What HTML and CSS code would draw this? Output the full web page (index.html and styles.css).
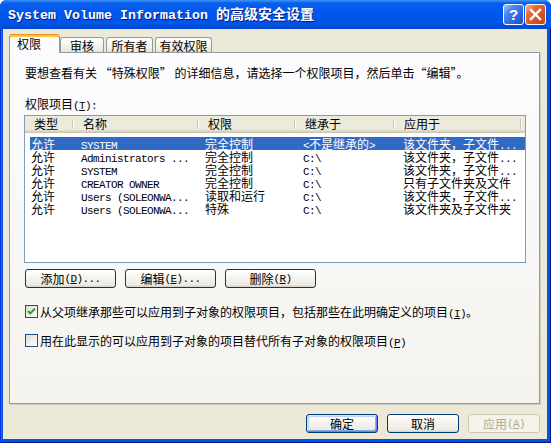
FILE: index.html
```html
<!DOCTYPE html>
<html>
<head>
<meta charset="utf-8">
<title>System Volume Information 的高级安全设置</title>
<link rel="stylesheet" href="styles.css">
</head>
<body>
<div class="window">
  <div class="titlebar">
    <div class="title"><span class="tl">System Volume Information </span>的高级安全设置</div>
    <div class="tbtns">
      <div class="tb help">?</div>
      <div class="tb close"><svg width="19" height="19" viewBox="0 0 19 19"><path d="M5 5 L14 14 M14 5 L5 14" stroke="#fff" stroke-width="2.4" stroke-linecap="square"/></svg></div>
    </div>
  </div>
  <div class="body">
    <div class="tabs">
      <div class="tab active">权限</div>
      <div class="tab t2">审核</div>
      <div class="tab t3">所有者</div>
      <div class="tab t4">有效权限</div>
    </div>
    <div class="panel">
      <p class="info">要想查看有关 “特殊权限” 的详细信息，请选择一个权限项目，然后单击“编辑”。</p>
      <p class="label">权限项目<span class="m">(<u>T</u>):</span></p>
      <div class="listbox">
        <div class="lhead">
          <div class="hc">类型</div>
          <div class="hc">名称</div>
          <div class="hc">权限</div>
          <div class="hc">继承于</div>
          <div class="hc">应用于</div>
        </div>
        <div class="lrows">
          <div class="lrow sel"><div>允许</div><div><span class="m">SYSTEM</span></div><div>完全控制</div><div><span class="m">&lt;</span>不是继承的<span class="m">&gt;</span></div><div>该文件夹，子文件<span class="m">...</span></div></div>
          <div class="lrow"><div>允许</div><div><span class="m">Administrators ...</span></div><div>完全控制</div><div><span class="m">C:\</span></div><div>该文件夹，子文件<span class="m">...</span></div></div>
          <div class="lrow"><div>允许</div><div><span class="m">SYSTEM</span></div><div>完全控制</div><div><span class="m">C:\</span></div><div>该文件夹，子文件<span class="m">...</span></div></div>
          <div class="lrow"><div>允许</div><div><span class="m">CREATOR OWNER</span></div><div>完全控制</div><div><span class="m">C:\</span></div><div>只有子文件夹及文件</div></div>
          <div class="lrow"><div>允许</div><div><span class="m">Users (SOLEONWA...</span></div><div>读取和运行</div><div><span class="m">C:\</span></div><div>该文件夹，子文件<span class="m">...</span></div></div>
          <div class="lrow"><div>允许</div><div><span class="m">Users (SOLEONWA...</span></div><div>特殊</div><div><span class="m">C:\</span></div><div>该文件夹及子文件夹</div></div>
        </div>
      </div>
      <div class="btnrow">
        <button class="btn wide">添加<span class="m">(<u>D</u>)...</span></button>
        <button class="btn wide">编辑<span class="m">(<u>E</u>)...</span></button>
        <button class="btn wide">删除<span class="m">(<u>R</u>)</span></button>
      </div>
      <div class="chk c1">
        <span class="box"><svg width="11" height="11" viewBox="0 0 11 11"><path d="M2 5 L4.3 7.4 L9 2.6" fill="none" stroke="#21A121" stroke-width="2"/></svg></span>
        <span>从父项继承那些可以应用到子对象的权限项目，包括那些在此明确定义的项目<span class="m">(<u>I</u>)</span>。</span>
      </div>
      <div class="chk c2">
        <span class="box"></span>
        <span>用在此显示的可以应用到子对象的项目替代所有子对象的权限项目<span class="m">(<u>P</u>)</span></span>
      </div>
    </div>
    <div class="footer">
      <button class="btn fb default">确定</button>
      <button class="btn fb">取消</button>
      <button class="btn fb disabled">应用<span class="m">(<u>A</u>)</span></button>
    </div>
  </div>
</div>
</body>
</html>
```

FILE: styles.css
```css
* { box-sizing: border-box; }
html, body { margin: 0; padding: 0; }
body {
  width: 551px;
  height: 443px;
  overflow: hidden;
  background: #ffffff;
  font: 12px "Noto Sans CJK SC", "Liberation Sans", sans-serif;
  color: #000;
}
p { margin: 0; }

.window {
  width: 551px;
  height: 443px;
  display: flex;
  flex-direction: column;
  background: #0055e5;
  border-radius: 7px 7px 0 0;
  box-shadow: inset 1px 0 #0831d9, inset -1px -1px #00138c, inset 2px 0 #166aee;
}

.titlebar {
  height: 29px;
  flex: none;
  display: flex;
  align-items: center;
  padding: 0 5px 0 8px;
  border-radius: 7px 7px 0 0;
  background: linear-gradient(180deg, #3d95ff 0, #0a5fea 3px, #0058ee 40%, #0055e5 80%, #0047d0 100%);
}
.title {
  flex: 1;
  color: #fff;
  font-weight: bold;
  font-size: 14px;
  white-space: nowrap;
  text-shadow: 1px 1px #0a1883;
  line-height: 16px;
}
.tl {
  font-family: "Liberation Mono", monospace;
  font-size: 13.33px;
}
.tbtns { display: flex; gap: 1px; }
.tb {
  width: 21px;
  height: 21px;
  border: 1px solid #fff;
  border-radius: 3px;
  display: flex;
  align-items: center;
  justify-content: center;
}
.help {
  background: linear-gradient(135deg, #a9c3f8 0%, #4a86f2 30%, #2a62e0 70%, #1d4fcf 100%);
  color: #fff;
  font: bold 15px "Liberation Sans", sans-serif;
}
.close {
  background: linear-gradient(135deg, #f7b196 0%, #e8693c 30%, #d9501f 70%, #c84416 100%);
}

.body {
  flex: 1;
  margin: 0 4px 4px 3px;
  background: #ece9d8;
  display: flex;
  flex-direction: column;
}

.tabs {
  display: flex;
  align-items: flex-end;
  margin: 5px 0 0 6px;
}
.tab {
  height: 15px;
  border: 1px solid #919b9c;
  border-bottom: none;
  border-radius: 3px 3px 0 0;
  background: linear-gradient(180deg, #ffffff, #f3f2ed 60%, #e6e4d9);
  display: flex;
  align-items: flex-end;
  justify-content: center;
  line-height: 13px;
  padding-bottom: 0;
  white-space: nowrap;
}
.tab.active {
  width: 51px;
  height: 19px;
  margin-bottom: -1px;
  position: relative;
  z-index: 1;
  background: #fcfcfe;
  border-top: 1px solid #e68b2c;
  box-shadow: inset 0 2px #ffc83c;
  justify-content: flex-start;
  padding-left: 7px;
  padding-bottom: 3px;
}
.t2 { width: 44px; }
.t3 { width: 47px; margin-left: 2px; }
.t4 { width: 57px; margin-left: 2px; }

.panel {
  flex: none;
  margin-left: 6px;
  width: 531px;
  height: 352px;
  border: 1px solid #919b9c;
  background: linear-gradient(180deg, #fcfcfe, #f4f3ee);
  box-shadow: 1px 1px 0 #d0cebf;
  padding: 0 0 0 15px;
}
.info {
  margin-top: 13px;
  height: 13px;
  line-height: 13px;
  white-space: nowrap;
}
.label {
  margin-top: 18px;
  height: 13px;
  line-height: 13px;
}
.m {
  font-family: "Liberation Mono", monospace;
  font-size: 11px;
  letter-spacing: -0.6px;
  line-height: 8px;
}

.listbox {
  margin: 5px 0 0 -1px;
  width: 502px;
  height: 148px;
  border: 1px solid #7f9db9;
  background: #fff;
}
.lhead {
  display: grid;
  grid-template-columns: 49px 125px 97px 99px 127px;
  height: 17px;
  background: #ebeadb;
  box-shadow: inset 0 -1px #cbc7b8, inset 0 -2px #d6d2c2, inset 0 -3px #e2decd;
}
.hc {
  position: relative;
  padding-left: 9px;
  line-height: 15px;
  white-space: nowrap;
}
.hc::after {
  content: "";
  position: absolute;
  right: 1px;
  top: 3px;
  bottom: 4px;
  width: 1px;
  background: #c7c5b2;
  box-shadow: 1px 0 #fff;
}
.lrows { padding-top: 4px; }
.lrow {
  display: grid;
  grid-template-columns: 44px 125px 97px 99px 127px;
  margin-left: 5px;
  height: 13px;
  line-height: 13px;
  white-space: nowrap;
}
.lrow > div:nth-child(1) { padding-left: 1px; }
.lrow > div:nth-child(2) { padding-left: 7px; }
.lrow > div:nth-child(3) { padding-left: 6px; }
.lrow > div:nth-child(4) { padding-left: 7px; }
.lrow > div:nth-child(5) { padding-left: 8px; }
.lrow.sel { background: #316ac5; color: #fff; }

.btn {
  font: inherit;
  font-size: 12px;
  color: #000;
  height: 19px;
  padding: 0;
  border: 1px solid #003c74;
  border-radius: 3px;
  background: linear-gradient(180deg, #ffffff, #f3f2ed 50%, #ecebe6 86%, #d6d0c5);
  display: flex;
  align-items: center;
  justify-content: center;
  line-height: 13px;
  white-space: nowrap;
}
.btnrow {
  display: flex;
  gap: 9px;
  margin-top: 6px;
}
.btn.wide { width: 91px; }

.chk {
  display: flex;
  align-items: center;
  gap: 2px;
  height: 13px;
  line-height: 13px;
  white-space: nowrap;
}
.c1 { margin-top: 17px; }
.c2 { margin-top: 16px; }
.box {
  width: 13px;
  height: 13px;
  flex: none;
  border: 1px solid #1c5180;
  background: linear-gradient(135deg, #dcdcd7, #ffffff);
  display: flex;
  align-items: center;
  justify-content: center;
}

.footer {
  display: flex;
  justify-content: flex-end;
  gap: 9px;
  margin-top: 10px;
  padding-right: 7px;
}
.btn.fb { width: 72px; }
.btn.default {
  box-shadow: inset 1px 1px #cee7ff, inset -1px -1px #6982ee, inset 2px 2px #bcd4f6, inset -2px -2px #89ade4;
}
.btn.disabled {
  border-color: #c9c7ba;
  color: #aca899;
  background: #f5f4ea;
}
```
